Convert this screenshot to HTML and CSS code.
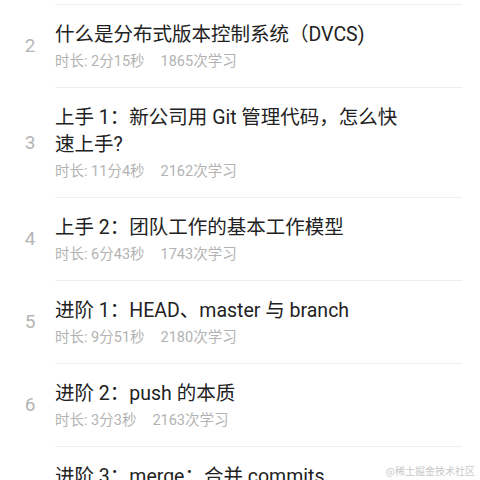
FILE: index.html
```html
<!DOCTYPE html>
<html lang="zh-CN">
<head>
<meta charset="utf-8">
<link rel="stylesheet" href="styles.css">
</head>
<body>
<ul class="list">
  <li class="row">
    <span class="num">2</span>
    <div class="body">
      <div class="title">什么是分布式版本控制系统（DVCS)</div>
      <div class="meta"><span>时长: 2分15秒</span><span>1865次学习</span></div>
    </div>
  </li>
  <li class="row">
    <span class="num">3</span>
    <div class="body">
      <div class="title">上手 1：新公司用 Git 管理代码，怎么快速上手?</div>
      <div class="meta"><span>时长: 11分4秒</span><span>2162次学习</span></div>
    </div>
  </li>
  <li class="row">
    <span class="num">4</span>
    <div class="body">
      <div class="title">上手 2：团队工作的基本工作模型</div>
      <div class="meta"><span>时长: 6分43秒</span><span>1743次学习</span></div>
    </div>
  </li>
  <li class="row">
    <span class="num">5</span>
    <div class="body">
      <div class="title">进阶 1：HEAD、master 与 branch</div>
      <div class="meta"><span>时长: 9分51秒</span><span>2180次学习</span></div>
    </div>
  </li>
  <li class="row">
    <span class="num">6</span>
    <div class="body">
      <div class="title">进阶 2：push 的本质</div>
      <div class="meta"><span>时长: 3分3秒</span><span>2163次学习</span></div>
    </div>
  </li>
  <li class="row">
    <span class="num">7</span>
    <div class="body">
      <div class="title">进阶 3：merge：合并 commits</div>
      <div class="meta"><span>时长: 5分8秒</span><span>2034次学习</span></div>
    </div>
  </li>
</ul>
<div class="watermark">@稀土掘金技术社区</div>
</body>
</html>
```

FILE: styles.css
```css
html, body {
  margin: 0;
  padding: 0;
  background: #ffffff;
  overflow: hidden;
  height: 480px;
}
body {
  font-family: Roboto, "Noto Sans CJK SC", sans-serif;
  position: relative;
}
.list {
  list-style: none;
  margin: 0;
  padding: 4px 0 0 0;
}
.row {
  display: flex;
  align-items: center;
}
.num {
  flex: 0 0 50px;
  padding-left: 5px;
  text-align: center;
  font-size: 19px;
  color: #b5b5b5;
}
.body {
  flex: 0 0 407px;
  border-top: 1px solid #eeeeee;
  padding: 16px 0 15px 0;
}
.title {
  font-size: 19.5px;
  line-height: 27px;
  height: auto;
  color: #222222;
  padding-right: 50px;
}
.meta {
  margin-top: 4px;
  font-size: 14.5px;
  line-height: 20px;
  color: #b3b3b3;
  display: flex;
  gap: 16px;
}
.watermark {
  position: absolute;
  right: 5px;
  top: 463px;
  font-size: 10px;
  color: #c8c8c8;
  font-family: "Noto Sans CJK SC", serif;
}
```
